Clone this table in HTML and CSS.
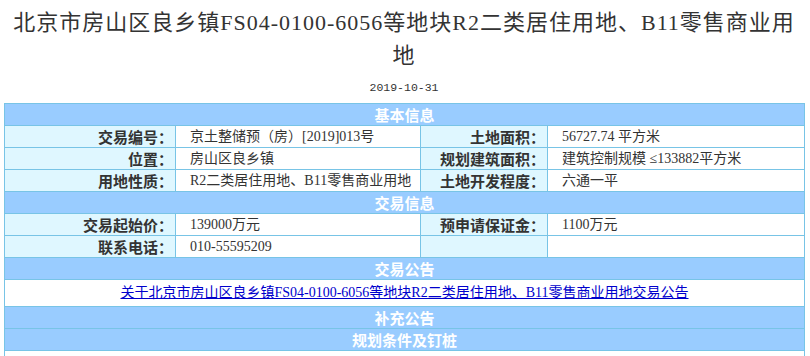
FILE: index.html
```html
<!DOCTYPE html>
<html lang="zh-CN">
<head>
<meta charset="utf-8">
<title>北京市房山区良乡镇FS04-0100-6056等地块</title>
<link rel="stylesheet" href="styles.css">
</head>
<body>
<div class="page">
  <h1 class="title">北京市房山区良乡镇FS04-0100-6056等地块R2二类居住用地、B11零售商业用地</h1>
  <div class="date">2019-10-31</div>
  <table class="info">
    <colgroup>
      <col class="c1"><col class="c2"><col class="c3"><col class="c4">
    </colgroup>
    <tr class="sec"><th colspan="4">基本信息</th></tr>
    <tr>
      <th class="lbl">交易编号：</th><td class="val">京土整储预（房）[2019]013号</td>
      <th class="lbl">土地面积：</th><td class="val">56727.74 平方米</td>
    </tr>
    <tr>
      <th class="lbl">位置：</th><td class="val">房山区良乡镇</td>
      <th class="lbl">规划建筑面积：</th><td class="val">建筑控制规模 ≤133882平方米</td>
    </tr>
    <tr>
      <th class="lbl">用地性质：</th><td class="val">R2二类居住用地、B11零售商业用地</td>
      <th class="lbl">土地开发程度：</th><td class="val">六通一平</td>
    </tr>
    <tr class="sec"><th colspan="4">交易信息</th></tr>
    <tr>
      <th class="lbl">交易起始价：</th><td class="val">139000万元</td>
      <th class="lbl">预申请保证金：</th><td class="val">1100万元</td>
    </tr>
    <tr>
      <th class="lbl">联系电话：</th><td class="val">010-55595209</td>
      <th class="lbl"></th><td class="val"></td>
    </tr>
    <tr class="sec"><th colspan="4">交易公告</th></tr>
    <tr class="linkrow">
      <td colspan="4"><a href="#">关于北京市房山区良乡镇FS04-0100-6056等地块R2二类居住用地、B11零售商业用地交易公告</a></td>
    </tr>
    <tr class="sec"><th colspan="4">补充公告</th></tr>
    <tr class="sec"><th colspan="4">规划条件及钉桩</th></tr>
    <tr class="blank"><td colspan="4"></td></tr>
  </table>
</div>
</body>
</html>
```
FILE: styles.css
```css
body {
  margin: 0;
  background: #fff;
  color: #333;
  font-family: "Liberation Serif", "Noto Sans CJK SC", serif;
}

.page {
  width: 800px;
  margin-left: 4px;
}

.title {
  margin: 0;
  padding-top: 6px;
  font-size: 22px;
  line-height: 33px;
  font-weight: normal;
  letter-spacing: 1px;
  text-align: center;
  color: #333;
}

.date {
  margin-top: 6px;
  font-family: "Liberation Mono", "Noto Sans CJK SC", monospace;
  font-size: 11.5px;
  line-height: 20px;
  text-align: center;
  color: #333;
}

.info {
  margin-top: 5px;
  width: 800px;
  border-collapse: collapse;
  table-layout: fixed;
}

.c1 { width: 171px; }
.c2 { width: 245px; }
.c3 { width: 127px; }
.c4 { width: 257px; }

.info th,
.info td {
  border: 1px solid #78c4e6;
  height: 21px;
  padding: 0;
  font-size: 14px;
  line-height: 20px;
}

.info .sec th {
  background: #99ccff;
  color: #fff;
  font-family: "Noto Sans CJK SC", sans-serif;
  font-size: 15px;
  font-weight: bold;
  text-align: center;
}

.info .lbl {
  background: #dff7ff;
  color: #333;
  font-family: "Noto Sans CJK SC", sans-serif;
  font-size: 15px;
  font-weight: bold;
  text-align: right;
  padding-right: 2px;
}

.info .val {
  background: #fff;
  color: #333;
  text-align: left;
  padding-left: 14px;
  white-space: nowrap;
}

.info .linkrow td {
  height: 26px;
  text-align: center;
  background: #fff;
}

.linkrow a {
  color: #0000cc;
  text-decoration: underline;
}

.info .blank td {
  height: 30px;
  background: #fff;
}
```
